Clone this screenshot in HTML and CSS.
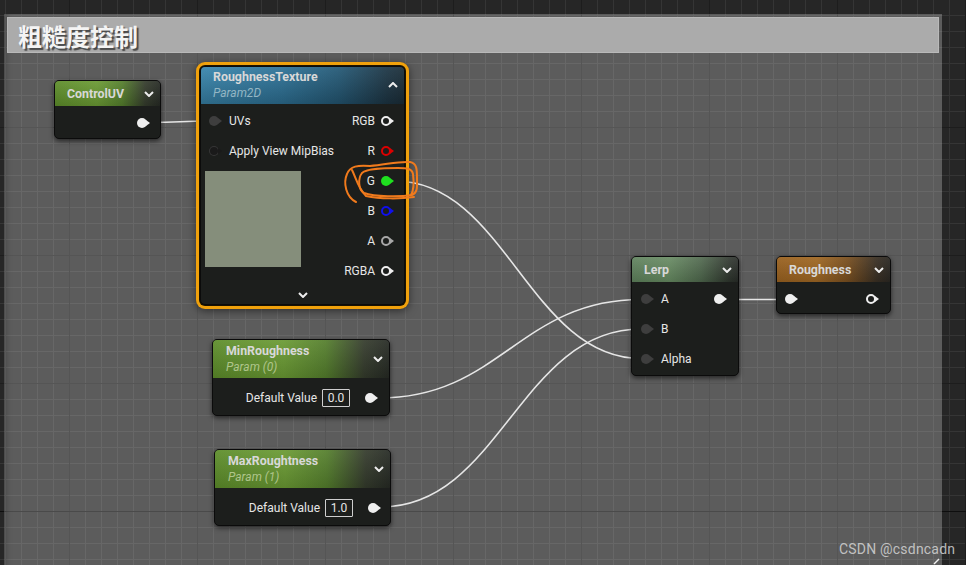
FILE: index.html
```html
<!DOCTYPE html>
<html lang="zh">
<head>
<meta charset="utf-8">
<title>Material Graph</title>
<link rel="stylesheet" href="styles.css">
</head>
<body>
<div class="graph">
  <div class="comment">
    <div class="comment-title">粗糙度控制</div>
  </div>

  <svg class="wires" width="966" height="565" viewBox="0 0 966 565">
    <path d="M150 122.5 C 180 122.5 180 121 209 121"/>
    <path d="M395 181 C 505 181 530 358.5 641 358.5"/>
    <path d="M379 398 C 500 398 520 299.5 641 299.5"/>
    <path d="M381 507 C 500 507 520 329 641 329"/>
    <path d="M728 299.5 L 785 299.5"/>
  </svg>

  <div class="node n-controluv">
    <div class="node-head head-1 head-green">
      <div class="titles"><div class="title">ControlUV</div></div>
      <svg class="chev" viewBox="0 0 10 6"><polyline points="1,1 5,5 9,1"/></svg>
    </div>
    <div class="node-body body-single">
      <div class="row row-end"><span class="pin filled c-white"></span></div>
    </div>
  </div>

  <div class="node n-texture">
    <div class="node-head head-2 head-blue">
      <div class="titles">
        <div class="title">RoughnessTexture</div>
        <div class="subtitle sub-blue">Param2D</div>
      </div>
      <svg class="chev" viewBox="0 0 10 6"><polyline points="1,5 5,1 9,5"/></svg>
    </div>
    <div class="tex-body">
      <div class="tex-left">
        <div class="row in-row"><span class="pin filled c-in"></span><span class="label">UVs</span></div>
        <div class="row in-row"><span class="pin filled c-in-dark"></span><span class="label">Apply View MipBias</span></div>
        <div class="preview"></div>
      </div>
      <div class="tex-right">
        <div class="row out-row"><span class="label">RGB</span><span class="pin hollow c-white"></span></div>
        <div class="row out-row"><span class="label">R</span><span class="pin hollow c-red"></span></div>
        <div class="row out-row"><span class="label">G</span><span class="pin filled c-green"></span></div>
        <div class="row out-row"><span class="label">B</span><span class="pin hollow c-blue"></span></div>
        <div class="row out-row"><span class="label">A</span><span class="pin hollow c-gray"></span></div>
        <div class="row out-row"><span class="label">RGBA</span><span class="pin hollow c-white"></span></div>
      </div>
    </div>
    <div class="tex-foot">
      <svg class="chev" viewBox="0 0 10 6"><polyline points="1,1 5,5 9,1"/></svg>
    </div>
  </div>

  <div class="node n-lerp">
    <div class="node-head head-1 head-lerp">
      <div class="titles"><div class="title">Lerp</div></div>
      <svg class="chev" viewBox="0 0 10 6"><polyline points="1,1 5,5 9,1"/></svg>
    </div>
    <div class="node-body body-lerp">
      <div class="row in-row"><span class="pin filled c-in"></span><span class="label">A</span><span class="pin filled c-white push"></span></div>
      <div class="row in-row"><span class="pin filled c-in"></span><span class="label">B</span></div>
      <div class="row in-row"><span class="pin filled c-in"></span><span class="label">Alpha</span></div>
    </div>
  </div>

  <div class="node n-rough">
    <div class="node-head head-1 head-orange">
      <div class="titles"><div class="title">Roughness</div></div>
      <svg class="chev" viewBox="0 0 10 6"><polyline points="1,1 5,5 9,1"/></svg>
    </div>
    <div class="node-body body-rough">
      <div class="row rough-row"><span class="pin filled c-white"></span><span class="pin hollow c-white push"></span></div>
    </div>
  </div>

  <div class="node n-min">
    <div class="node-head head-2 head-green param-head">
      <div class="titles">
        <div class="title">MinRoughness</div>
        <div class="subtitle sub-green">Param (0)</div>
      </div>
      <svg class="chev" viewBox="0 0 10 6"><polyline points="1,1 5,5 9,1"/></svg>
    </div>
    <div class="node-body body-param">
      <div class="row param-row"><span class="label">Default Value</span><span class="val">0.0</span><span class="pin filled c-white"></span></div>
    </div>
  </div>

  <div class="node n-max">
    <div class="node-head head-2 head-green param-head">
      <div class="titles">
        <div class="title">MaxRoughtness</div>
        <div class="subtitle sub-green">Param (1)</div>
      </div>
      <svg class="chev" viewBox="0 0 10 6"><polyline points="1,1 5,5 9,1"/></svg>
    </div>
    <div class="node-body body-param">
      <div class="row param-row"><span class="label">Default Value</span><span class="val">1.0</span><span class="pin filled c-white"></span></div>
    </div>
  </div>

  <svg class="marks" width="966" height="565" viewBox="0 0 966 565">
    <path class="scribble" d="M356 202 C346 197 343 183 347 174 C350 166 358 165 370 166 C385 165 398 161 410 162 C417 163 417 170 417 178 C417 186 418 193 412 195 C400 197 375 197 364 193 C358 190 358 178 362 173 C367 168 385 168 398 168 C406 168 412 168 413 174 C414 182 414 190 411 195"/>
    <path class="scribble" d="M352 170 C356 178 358 188 366 196 C380 199 400 199 414 197"/>
    <path class="handle" d="M934 564 L939 559"/>
  </svg>

  <div class="watermark">CSDN @csdncadn</div>
</div>
</body>
</html>
```

FILE: styles.css
```css
* { box-sizing: border-box; }
html, body { margin: 0; padding: 0; }
body {
  width: 966px;
  height: 565px;
  overflow: hidden;
  background: #262626;
  font-family: Roboto, "Liberation Sans", sans-serif;
}

.graph {
  position: relative;
  width: 966px;
  height: 565px;
  overflow: hidden;
  background-color: #262626;
  background-image:
    linear-gradient(to bottom, transparent 511px, #0e0e0e 511px, #0e0e0e 512px, transparent 512px),
    linear-gradient(to right, #1d1d1d 1px, transparent 1px),
    linear-gradient(to bottom, #1d1d1d 1px, transparent 1px),
    linear-gradient(to right, #353535 1px, transparent 1px),
    linear-gradient(to bottom, #353535 1px, transparent 1px);
  background-size: 100% 100%, 128px 100%, 100% 128px, 16px 100%, 100% 16px;
  background-position: 0 0, 69px 0, 0 127px, 5px 0, 0 15px;
  background-repeat: no-repeat, repeat, repeat, repeat, repeat;
}

/* comment box */
.comment {
  position: absolute;
  left: 4px;
  top: 14px;
  width: 938px;
  height: 600px;
  padding: 3px;
  background: rgba(255, 255, 255, 0.25);
  box-shadow: inset 6px 0 6px -4px rgba(0, 0, 0, 0.25);
  z-index: 0;
}
.comment-title {
  height: 36px;
  background: #ababab;
  border: 1px solid #b9b9b9;
  padding-left: 10px;
  font-family: "Noto Sans CJK SC", "Noto Sans", sans-serif;
  font-weight: 700;
  font-size: 24px;
  line-height: 36px;
  color: #f4f4f4;
  text-shadow: 2px 2px 1px rgba(40, 40, 40, 0.75);
}

/* wires */
.wires {
  position: absolute;
  left: 0;
  top: 0;
  z-index: 1;
  fill: none;
  stroke: #e6e6e6;
  stroke-width: 1.6;
}

/* nodes */
.node {
  position: absolute;
  z-index: 2;
  display: flex;
  flex-direction: column;
  background: #1c1e1c;
  border: 1px solid #0b0b0b;
  border-radius: 5px;
  box-shadow: 0 2px 5px rgba(0, 0, 0, 0.6);
  overflow: hidden;
  color: #e6e6e6;
  font-size: 12px;
}
.n-controluv { left: 54px; top: 80px; width: 107px; height: 59px; }
.n-texture {
  left: 200px; top: 66px; width: 205px; height: 239px;
  overflow: visible;
  box-shadow: 0 0 0 1px #1a1200, 0 0 0 4px #f0a10c, 0 2px 8px 4px rgba(0, 0, 0, 0.5);
}
.n-lerp { left: 631px; top: 256px; width: 108px; height: 120px; }
.n-rough { left: 776px; top: 256px; width: 115px; height: 58px; }
.n-min { left: 212px; top: 339px; width: 178px; height: 77px; }
.n-max { left: 214px; top: 449px; width: 177px; height: 77px; }

.node-head {
  flex: none;
  display: flex;
  align-items: center;
  justify-content: space-between;
  padding: 0 6px 0 12px;
}
.n-texture .node-head { border-radius: 4px 4px 0 0; }
.head-1 { height: 25px; }
.head-2 { height: 37px; padding-top: 2px; padding-bottom: 3px; }
.param-head { height: 38px; padding-left: 13px; padding-top: 3px; }

.title { font-weight: 700; font-size: 12.4px; line-height: 16px; color: #d8d8d8; white-space: nowrap; }
.subtitle { font-style: italic; line-height: 16px; white-space: nowrap; }
.sub-blue { color: #93b6c4; }
.sub-green { color: #afc58b; }

.chev {
  width: 10px;
  height: 6px;
  flex: none;
  fill: none;
  stroke: #ededed;
  stroke-width: 2;
}

.head-green {
  background:
    linear-gradient(180deg, rgba(255, 255, 255, 0.07), rgba(0, 0, 0, 0.14)),
    linear-gradient(90deg, #5d8d2a 0%, #6a9a33 40%, #547e2c 64%, #343b2c 86%, #262a24 100%);
}
.head-blue {
  background:
    linear-gradient(180deg, rgba(255, 255, 255, 0.06), rgba(0, 0, 0, 0.22)),
    linear-gradient(90deg, #3a87ae 0%, #2f7499 40%, #255a77 68%, #1e3746 92%, #1c2f3a 100%);
}
.head-lerp {
  background:
    linear-gradient(180deg, rgba(255, 255, 255, 0.1), rgba(0, 0, 0, 0.12)),
    linear-gradient(90deg, #5c7f5a 0%, #64885f 35%, #4d664b 65%, #2d342c 92%, #272b27 100%);
}
.head-orange {
  background:
    linear-gradient(180deg, rgba(255, 255, 255, 0.06), rgba(0, 0, 0, 0.14)),
    linear-gradient(90deg, #9a6220 0%, #a06824 35%, #7a5020 62%, #3a3024 88%, #2b2823 100%);
}

.node-body { flex: 1; display: flex; flex-direction: column; }
.row { height: 30px; display: flex; align-items: center; }
.label { white-space: nowrap; line-height: 16px; }

.body-single { padding: 2px 13px 0 0; }
.row-end { justify-content: flex-end; }

.body-lerp { padding: 2px 14px 0 9px; }
.in-row { gap: 10px; }
.push { margin-left: auto; }

.body-rough { padding: 3px 14px 0 8px; }
.rough-row { height: 28px; }

.body-param { padding: 5px 14px 0 0; }
.n-max .body-param { padding-right: 12px; }
.param-row { justify-content: flex-end; }
.val {
  min-width: 28px;
  height: 18px;
  margin: 0 15px 0 5px;
  border: 1px solid #cfcfcf;
  border-radius: 1px;
  text-align: center;
  line-height: 16px;
  padding: 0 3px;
}

/* texture sample body */
.tex-body {
  display: flex;
  justify-content: space-between;
  padding: 2px 13px 0 4px;
}
.tex-left .in-row { padding-left: 4px; }
.preview { width: 96px; height: 96px; margin-top: 5px; background: #858e7b; }
.out-row { justify-content: flex-end; gap: 6px; }
.tex-foot {
  height: 18px;
  display: flex;
  justify-content: center;
  align-items: center;
}

/* pins */
.pin {
  position: relative;
  flex: none;
  width: 10px;
  height: 10px;
  border-radius: 50%;
}
.pin::after {
  content: "";
  position: absolute;
  top: 50%;
  right: -3px;
  transform: translateY(-50%);
  border-left: 4px solid var(--c);
  border-top: 3px solid transparent;
  border-bottom: 3px solid transparent;
}
.pin.filled { background: var(--c); }
.pin.hollow { border: 2px solid var(--c); }
.pin.hollow::after { right: -5px; }
.pin.c-in-dark { box-shadow: inset 0 0 0 1px #363636; }

.c-white { --c: #efefef; }
.c-red { --c: #dc0000; }
.c-green { --c: #1fe01f; }
.c-blue { --c: #1010ec; }
.c-gray { --c: #a8a8a8; }
.c-in { --c: #3e3e3e; }
.c-in-dark { --c: #1a1a1a; }

/* annotation overlay */
.marks {
  position: absolute;
  left: 0;
  top: 0;
  z-index: 3;
  fill: none;
  pointer-events: none;
}
.scribble { stroke: #f07a1c; stroke-width: 2; stroke-linecap: round; stroke-linejoin: round; }
.handle { stroke: #f0f0f0; stroke-width: 1.5; }

.watermark {
  position: absolute;
  left: 839px;
  top: 542px;
  z-index: 4;
  font-family: Roboto, "Liberation Sans", sans-serif;
  font-size: 14px;
  line-height: 14px;
  letter-spacing: 0.2px;
  color: rgba(220, 220, 220, 0.8);
  white-space: nowrap;
}
```
